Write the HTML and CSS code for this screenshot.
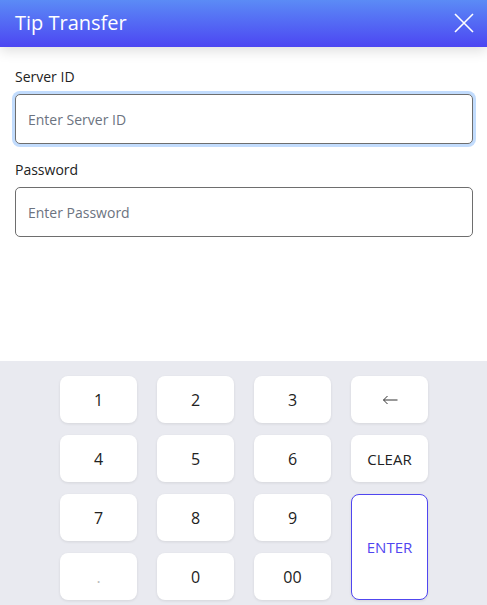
FILE: index.html
```html
<!DOCTYPE html>
<html lang="en">
<head>
<meta charset="utf-8">
<title>Tip Transfer</title>
<link rel="stylesheet" href="styles.css">
</head>
<body>
<div class="app">
  <header class="header">
    <h1 class="title">Tip Transfer</h1>
    <button class="close" aria-label="Close">
      <svg width="20" height="20" viewBox="0 0 20 20"><path d="M1 1 L19 19 M19 1 L1 19" stroke="#fff" stroke-width="1.6" fill="none"/></svg>
    </button>
  </header>
  <main class="form">
    <label class="label" for="sid">Server ID</label>
    <input id="sid" class="input focused" type="text" placeholder="Enter Server ID">
    <label class="label" for="pwd">Password</label>
    <input id="pwd" class="input" type="password" placeholder="Enter Password">
  </main>
  <section class="keypad">
    <div class="grid">
      <button class="key">1</button>
      <button class="key">2</button>
      <button class="key">3</button>
      <button class="key">
        <svg width="16" height="10" viewBox="0 0 16 10"><path d="M15.5 5 H1.5 M5.5 1 L1.5 5 L5.5 9" stroke="#333" stroke-width="1" fill="none"/></svg>
      </button>
      <button class="key">4</button>
      <button class="key">5</button>
      <button class="key">6</button>
      <button class="key small">CLEAR</button>
      <button class="key">7</button>
      <button class="key">8</button>
      <button class="key">9</button>
      <button class="key enter small">ENTER</button>
      <button class="key dim">.</button>
      <button class="key">0</button>
      <button class="key">00</button>
    </div>
  </section>
</div>
</body>
</html>
```

FILE: styles.css
```css
* { box-sizing: border-box; }
html, body { margin: 0; padding: 0; height: 100%; }
body {
  font-family: "Open Sans", "Noto Sans", sans-serif;
  background: #fff;
  color: #222;
}
.app {
  display: flex;
  flex-direction: column;
  height: 100%;
}
.header {
  height: 47px;
  flex: none;
  display: flex;
  align-items: center;
  justify-content: space-between;
  padding: 0 13px 0 15px;
  background: linear-gradient(to bottom, #5b8bf6, #4c46f2);
  box-shadow: 0 4px 12px rgba(0, 0, 0, 0.13);
  position: relative;
  z-index: 1;
}
.title {
  margin: 0;
  font-size: 20px;
  font-weight: 400;
  color: #fff;
  line-height: 1;
  padding-bottom: 2px;
}
.close {
  background: none;
  border: 0;
  padding: 0;
  width: 20px;
  height: 20px;
  display: flex;
  margin-bottom: 2px;
}
.form {
  flex: 1;
  display: flex;
  flex-direction: column;
  padding: 20px 14px 0 15px;
}
.label {
  font-size: 14px;
  line-height: 20px;
  color: #222;
  margin-bottom: 7px;
}
.input {
  height: 50px;
  border: 1px solid #6e6e6e;
  border-radius: 5px;
  padding: 0 12px;
  font-family: inherit;
  font-size: 14px;
  color: #222;
  margin-bottom: 16px;
  outline: none;
}
.input::placeholder { color: #6c7380; }
.input.focused { box-shadow: 0 0 0 3px #c2dcfd; }
.keypad {
  flex: none;
  height: 244px;
  background: #e9eaf0;
  padding-top: 15px;
  display: flex;
  justify-content: center;
}
.grid {
  display: grid;
  grid-template-columns: repeat(4, 77px);
  grid-auto-rows: 47px;
  column-gap: 20px;
  row-gap: 12px;
  margin-left: 1px;
}
.key {
  background: #fff;
  border: 0;
  border-radius: 8px;
  box-shadow: 0 1px 3px rgba(0, 0, 0, 0.09);
  font-family: inherit;
  font-size: 16px;
  color: #222;
  display: flex;
  align-items: center;
  justify-content: center;
  padding: 0;
}
.key.small { font-size: 15px; font-weight: 500; }
.key.dim { color: #bbb; }
.key.enter {
  grid-column: 4;
  grid-row: 3 / span 2;
  border: 1px solid #5046f0;
  color: #5046f0;
}
```
